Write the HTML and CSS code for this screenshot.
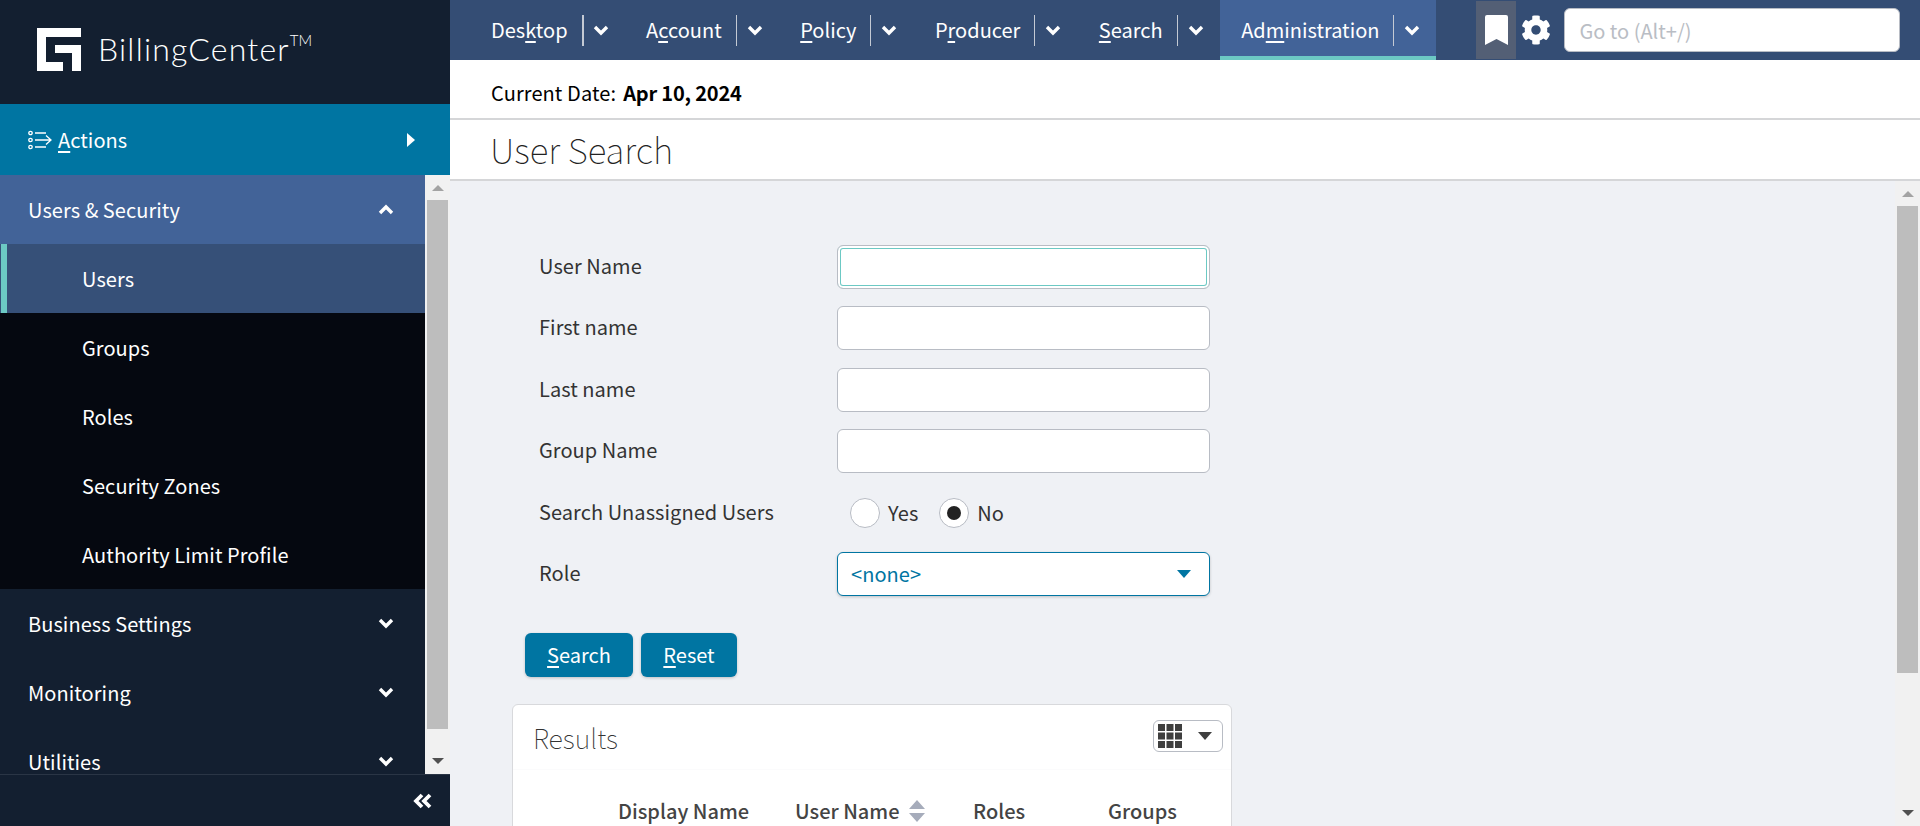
FILE: index.html
```html
<!DOCTYPE html>
<html lang="en">
<head>
<meta charset="utf-8">
<title>User Search - BillingCenter</title>
<link rel="stylesheet" href="styles.css">
</head>
<body>
<div class="app">
  <aside class="sidebar">
    <div class="logo">
      <svg class="logo-mark" viewBox="0 0 44 43" aria-hidden="true"><path fill="#fff" d="M0 0H44V9H9V34H26V43H0Z"/><path fill="#fff" d="M18 17H44V43H35V25H18Z"/></svg>
      <span class="logo-text">BillingCenter<sup class="tm">TM</sup></span>
    </div>
    <div class="actions">
      <svg class="actions-icon" viewBox="0 0 24 20" aria-hidden="true"><g fill="none" stroke="#fff" stroke-width="1.3"><circle cx="2.5" cy="3" r="1.7"/><circle cx="2.5" cy="10" r="1.7"/><circle cx="2.5" cy="17" r="1.7"/><path d="M7 3H18M7 10H23M7 17H18M18 5.5L23 10L18 14.5"/></g></svg>
      <span class="actions-label"><u>A</u>ctions</span>
      <svg class="actions-caret" viewBox="0 0 8 14" aria-hidden="true"><path fill="#fff" d="M0 0L8 7L0 14Z"/></svg>
    </div>
    <div class="side-body">
      <nav class="side-nav">
        <div class="side-head open">Users &amp; Security
          <svg class="chev" viewBox="0 0 16 11" aria-hidden="true"><path d="M2 9L8 3L14 9" /></svg>
        </div>
        <div class="side-sub selected">Users</div>
        <div class="side-sub">Groups</div>
        <div class="side-sub">Roles</div>
        <div class="side-sub">Security Zones</div>
        <div class="side-sub">Authority Limit Profile</div>
        <div class="side-head">Business Settings
          <svg class="chev" viewBox="0 0 16 11" aria-hidden="true"><path d="M2 2L8 8L14 2" /></svg>
        </div>
        <div class="side-head">Monitoring
          <svg class="chev" viewBox="0 0 16 11" aria-hidden="true"><path d="M2 2L8 8L14 2" /></svg>
        </div>
        <div class="side-head">Utilities
          <svg class="chev" viewBox="0 0 16 11" aria-hidden="true"><path d="M2 2L8 8L14 2" /></svg>
        </div>
      </nav>
      <div class="scrollbar side-scroll">
        <span class="arrow up"></span>
        <span class="thumb"></span>
        <span class="arrow down"></span>
      </div>
    </div>
    <div class="side-foot">
      <svg class="collapse" viewBox="0 0 20 16" aria-hidden="true"><path d="M9 2L3 8L9 14M17 2L11 8L17 14"/></svg>
    </div>
  </aside>

  <main class="main">
    <header class="topbar">
      <div class="tab"><span class="tab-label">Des<u>k</u>top</span><span class="tab-split split-thick"></span><svg class="chev" viewBox="0 0 16 11" aria-hidden="true"><path d="M2 2L8 8L14 2"/></svg></div>
      <div class="tab"><span class="tab-label">A<u>c</u>count</span><span class="tab-split"></span><svg class="chev" viewBox="0 0 16 11" aria-hidden="true"><path d="M2 2L8 8L14 2"/></svg></div>
      <div class="tab"><span class="tab-label"><u>P</u>olicy</span><span class="tab-split"></span><svg class="chev" viewBox="0 0 16 11" aria-hidden="true"><path d="M2 2L8 8L14 2"/></svg></div>
      <div class="tab"><span class="tab-label">P<u>r</u>oducer</span><span class="tab-split"></span><svg class="chev" viewBox="0 0 16 11" aria-hidden="true"><path d="M2 2L8 8L14 2"/></svg></div>
      <div class="tab"><span class="tab-label"><u>S</u>earch</span><span class="tab-split"></span><svg class="chev" viewBox="0 0 16 11" aria-hidden="true"><path d="M2 2L8 8L14 2"/></svg></div>
      <div class="tab active"><span class="tab-label">Ad<u>m</u>inistration</span><span class="tab-split"></span><svg class="chev" viewBox="0 0 16 11" aria-hidden="true"><path d="M2 2L8 8L14 2"/></svg></div>
      <div class="top-tools">
        <span class="bookmark"><svg viewBox="0 0 23 30" aria-hidden="true"><path fill="#fff" d="M2 0H21Q23 0 23 2V30L11.5 24L0 30V2Q0 0 2 0Z"/></svg></span>
        <svg class="gear" viewBox="0 0 512 512" aria-hidden="true"><path fill="#fff" d="M487.4 315.7l-42.6-24.6c4.3-23.2 4.3-47 0-70.2l42.6-24.6c4.9-2.8 7.1-8.6 5.5-14-11.1-35.6-30-67.8-54.7-94.6-3.8-4.1-10-5.1-14.8-2.3L380.8 110c-17.9-15.4-38.5-27.3-60.8-35.1V25.8c0-5.6-3.9-10.5-9.4-11.7-36.7-8.2-74.3-7.8-109.2 0-5.5 1.2-9.4 6.1-9.4 11.7V75c-22.2 7.9-42.8 19.8-60.8 35.1L88.7 85.5c-4.9-2.8-11-1.9-14.8 2.3-24.7 26.7-43.6 58.9-54.7 94.6-1.7 5.4.6 11.2 5.5 14L67.3 221c-4.3 23.2-4.3 47 0 70.2l-42.6 24.6c-4.9 2.8-7.1 8.6-5.5 14 11.1 35.6 30 67.8 54.7 94.6 3.8 4.1 10 5.1 14.8 2.3l42.6-24.6c17.9 15.4 38.5 27.3 60.8 35.1v49.2c0 5.6 3.9 10.5 9.4 11.7 36.7 8.2 74.3 7.8 109.2 0 5.5-1.2 9.4-6.1 9.4-11.7v-49.2c22.2-7.9 42.8-19.8 60.8-35.1l42.6 24.6c4.9 2.8 11 1.9 14.8-2.3 24.7-26.7 43.6-58.9 54.7-94.6 1.5-5.5-.7-11.3-5.6-14.1zM256 336c-44.1 0-80-35.9-80-80s35.9-80 80-80 80 35.9 80 80-35.9 80-80 80z"/></svg>
        <input class="goto" type="text" placeholder="Go to (Alt+/)">
      </div>
    </header>
    <div class="datebar"><span class="date-label">Current Date:</span><strong class="date-value">Apr 10, 2024</strong></div>
    <div class="titlebar"><h1 class="page-title">User Search</h1></div>
    <div class="content">
      <div class="scroll-area">
        <form class="search-form">
          <label class="field-label">User Name</label><input class="field focused" type="text">
          <label class="field-label">First name</label><input class="field" type="text">
          <label class="field-label">Last name</label><input class="field" type="text">
          <label class="field-label">Group Name</label><input class="field" type="text">
          <label class="field-label">Search Unassigned Users</label>
          <div class="radios">
            <span class="radio"></span><span class="radio-text">Yes</span>
            <span class="radio checked"></span><span class="radio-text">No</span>
          </div>
          <label class="field-label">Role</label>
          <div class="select"><span>&lt;none&gt;</span><span class="select-caret"></span></div>
        </form>
        <div class="buttons">
          <button class="btn btn-search" type="button"><u>S</u>earch</button>
          <button class="btn btn-reset" type="button"><u>R</u>eset</button>
        </div>
        <section class="card">
          <div class="card-head">
            <h2 class="card-title">Results</h2>
            <div class="col-btn">
              <svg class="grid-icon" viewBox="0 0 24 24" aria-hidden="true"><path fill="#3f3f3f" d="M0 0h7v7H0zM8.5 0h7v7h-7zM17 0h7v7h-7zM0 8.5h7v7H0zM8.5 8.5h7v7h-7zM17 8.5h7v7h-7zM0 17h7v7H0zM8.5 17h7v7h-7zM17 17h7v7h-7z"/></svg>
              <span class="col-caret"></span>
            </div>
          </div>
          <div class="table-head">
            <span class="th th-display">Display Name</span>
            <span class="th th-user">User Name<svg class="sort" viewBox="0 0 16 22" aria-hidden="true"><path fill="#a6acbb" d="M8 0L16 9H0ZM0 13H16L8 22Z"/></svg></span>
            <span class="th th-roles">Roles</span>
            <span class="th th-groups">Groups</span>
          </div>
        </section>
      </div>
      <div class="scrollbar main-scroll">
        <span class="arrow up"></span>
        <span class="thumb"></span>
        <span class="arrow down"></span>
      </div>
    </div>
  </main>
</div>
</body>
</html>
```
FILE: styles.css
```css
* { box-sizing: border-box; }
html, body { margin: 0; height: 100%; overflow: hidden; }
body { font-family: "Noto Sans CJK SC", "Noto Sans", sans-serif; font-size: 20px; color: #333; background: #eff1f5; }
u { text-underline-offset: 3px; text-decoration-thickness: 2px; }

.app { display: flex; height: 826px; }

/* Sidebar */
.sidebar { width: 450px; flex: none; display: flex; flex-direction: column; background: #131f30; color: #fff; letter-spacing: .06px; }
.logo { height: 104px; flex: none; display: flex; align-items: flex-start; padding: 28px 0 0 37px; }
.logo-mark { width: 44px; height: 43px; flex: none; }
.logo-text { font-family: Lato, sans-serif; font-weight: 300; font-size: 32px; line-height: 40px; margin-left: 17px; margin-top: 1px; letter-spacing: 1.2px; }
.tm { font-size: 15px; line-height: 0; vertical-align: 15px; letter-spacing: 0; }
.actions { height: 71px; flex: none; display: flex; align-items: center; background: #0075a2; padding: 0 35px 0 28px; }
.actions-icon { width: 24px; height: 20px; flex: none; }
.actions-label { margin-left: 6px; font-size: 20px; }
.actions-caret { width: 8px; height: 14px; margin-left: auto; }
.side-body { flex: 1; min-height: 0; display: flex; }
.side-nav { flex: 1; min-width: 0; overflow: hidden; }
.side-head { height: 69px; display: flex; align-items: center; justify-content: space-between; padding: 0 31px 0 28px; line-height: 24px; }
.side-head.open { background: #426398; }
.side-sub { height: 69px; display: flex; align-items: center; padding-left: 82px; background: #050810; }
.side-sub.selected { background: linear-gradient(90deg, #365078 1px, #6cc9c4 1px, #6cc9c4 7px, #365078 7px); }
.chev { width: 16px; height: 11px; flex: none; }
.chev path { fill: none; stroke: #fff; stroke-width: 3.4; }

.scrollbar { width: 25px; flex: none; display: flex; flex-direction: column; align-items: center; background: #f1f1f1; }
.thumb { display: block; width: 21px; background: #bdbdbd; }
.arrow { display: block; width: 0; height: 0; border-left: 6px solid transparent; border-right: 6px solid transparent; }
.arrow.up { border-bottom: 6px solid #a3a3a3; margin-top: 10px; }
.arrow.down { border-top: 6px solid #505050; margin-bottom: 10px; }
.side-scroll .thumb { height: 529px; margin: 9px 0 29px; }
.main-scroll .thumb { height: 467px; margin: 9px 0 137px; }

.side-foot { height: 52px; flex: none; display: flex; align-items: center; justify-content: flex-end; padding-right: 17px; border-top: 1px solid #2a3545; }
.collapse { width: 20px; height: 16px; }
.collapse path { fill: none; stroke: #fff; stroke-width: 3.8; }

/* Main */
.main { flex: 1; min-width: 0; display: flex; flex-direction: column; }
.topbar { height: 60px; flex: none; display: flex; align-items: stretch; padding-left: 25px; background: #344d74; color: #fff; }
.tab { display: flex; align-items: center; padding: 0 15px 0 16px; margin-right: 6.5px; }
.tab-label { padding-bottom: 1px; }
.tab-split { width: 1px; height: 31px; margin-left: 14px; margin-right: 10px; background: #c4cad4; }
.split-thick { width: 2px; margin-right: 9px; }
.tab.active { background: #426398; box-shadow: inset 0 -4px 0 #6cc9c4; margin: 0 0 0 -5px; padding: 0 16px 0 21px; }
.top-tools { margin-left: 40px; display: flex; align-items: center; }
.bookmark { width: 40px; height: 58px; display: flex; align-items: center; justify-content: center; background: #535f75; }
.bookmark svg { width: 23px; height: 30px; }
.gear { width: 30px; height: 30px; margin-left: 5px; }
.goto { width: 336px; height: 44px; margin-left: 13px; padding: 0 14px; border: 1px solid #b8bcc4; border-radius: 6px; background: #fff; font: inherit; }
.goto::placeholder { color: #b9bdc4; opacity: 1; }

.datebar { height: 60px; flex: none; display: flex; align-items: center; padding: 6px 0 0 41px; background: #fff; border-bottom: 2px solid #d5d6d8; color: #000; }
.date-label { margin-right: 7px; letter-spacing: .1px; }
.date-value { font-weight: 700; letter-spacing: -.2px; }
.titlebar { height: 61px; flex: none; display: flex; align-items: center; padding: 0 0 3px 40px; background: #fff; border-bottom: 2px solid #d5d6d8; }
.page-title { margin: 0; font-size: 35px; font-weight: 100; color: #222; }

.content { flex: 1; min-height: 0; display: flex; }
.scroll-area { flex: 1; min-width: 0; overflow: hidden; padding: 64px 0 0 63px; }
.search-form { display: grid; grid-template-columns: 298px 373px; grid-auto-rows: 44px; row-gap: 17.4px; align-items: center; margin-left: 26px; letter-spacing: .05px; }
.field-label { color: #333; padding-bottom: 3px; }
.field { width: 100%; height: 44px; border: 1px solid #b8bcc4; border-radius: 6px; background: #fff; padding: 0 12px; }
.field.focused { box-shadow: inset 0 0 0 2px #fff, inset 0 0 0 3px #6cc9c4; outline: none; }
.radios { display: flex; align-items: center; padding-left: 13px; }
.radio { width: 30px; height: 30px; border-radius: 50%; border: 1px solid #b8bcc4; background: #fff; position: relative; margin-right: 8px; }
.radio.checked::after { content: ""; position: absolute; left: 7px; top: 7px; width: 14px; height: 14px; border-radius: 50%; background: #222; }
.radio-text { margin-right: 21px; }
.select { width: 100%; height: 44px; display: flex; align-items: center; justify-content: space-between; padding: 0 18px 0 13px; border: 1px solid #0075a2; border-radius: 6px; background: #fff; color: #0075a2; box-shadow: 0 1px 3px rgba(0,0,0,.2); }
.select-caret { width: 0; height: 0; border-left: 7px solid transparent; border-right: 7px solid transparent; border-top: 8px solid #0075a2; }
.buttons { display: flex; gap: 8px; margin: 37px 0 0 12px; }
.btn { height: 44px; padding: 0; border: 0; border-radius: 6px; background: #0075a2; color: #fff; font: inherit; box-shadow: 0 1px 3px rgba(0,0,0,.2); }
.btn-search { width: 108px; }
.btn-reset { width: 96px; }
.card { width: 720px; height: 300px; margin: 27px 0 0 -1px; background: #fff; border: 1px solid #d8d9dc; border-radius: 6px; }
.card-head { height: 65px; display: flex; align-items: flex-start; justify-content: space-between; padding: 15px 8px 0 20px; border-bottom: 1px solid #fbfbfc; }
.card-title { margin: 0; font-size: 27px; line-height: 36px; font-weight: 100; color: #333; }
.col-btn { width: 70px; height: 32px; display: flex; align-items: center; gap: 16px; padding-left: 4px; border: 1px solid #b8bcc4; border-radius: 6px; }
.grid-icon { width: 24px; height: 24px; }
.col-caret { width: 0; height: 0; border-left: 7px solid transparent; border-right: 7px solid transparent; border-top: 8px solid #3f3f3f; }
.table-head { position: relative; height: 60px; }
.th { position: absolute; top: 26px; font-weight: 500; color: #444; display: flex; align-items: center; line-height: 30px; }
.th-display { left: 105px; }
.th-user { left: 282px; }
.th-roles { left: 460px; }
.th-groups { left: 595px; }
.sort { width: 16px; height: 22px; margin-left: 9px; }
```
